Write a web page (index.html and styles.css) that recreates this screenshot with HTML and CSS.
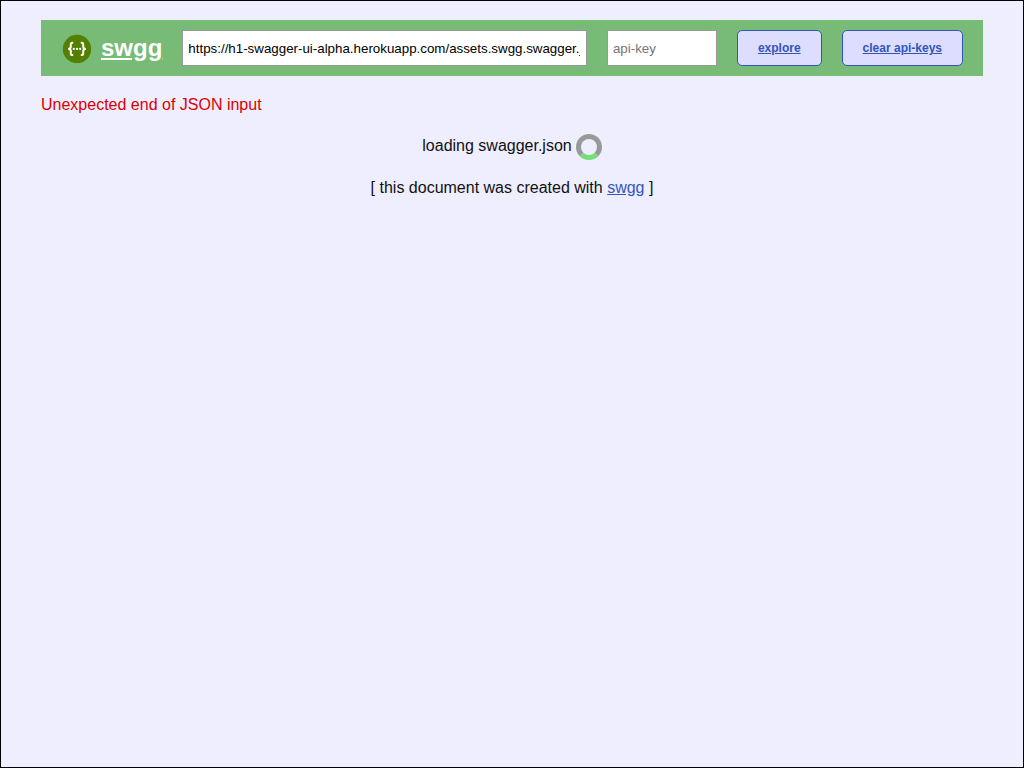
FILE: index.html
```html
<!DOCTYPE html>
<html lang="en">
<head>
<meta charset="utf-8">
<meta name="viewport" content="width=device-width, initial-scale=1">
<title>swgg</title>
<link rel="stylesheet" href="styles.css">
</head>
<body class="page">
<form class="toolbar">
  <a class="brand" href="#">
    <svg class="brand-logo" viewBox="-1 -1 31 30" aria-hidden="true">
      <circle cx="15" cy="15" r="14.2" fill="#547f00"/>
      <g fill="none" stroke="#fff" stroke-width="2">
        <path d="M11.2 8.8H10.4Q8.8 8.8 8.8 10.4V12.8Q8.8 14.9 6.2 14.9Q8.8 14.9 8.8 17V19.4Q8.8 21 10.4 21H11.2"/>
        <path d="M18.8 8.8H19.6Q21.2 8.8 21.2 10.4V12.8Q21.2 14.9 23.8 14.9Q21.2 14.9 21.2 17V19.4Q21.2 21 19.6 21H18.8"/>
      </g>
      <g fill="#fff">
        <circle cx="11.8" cy="14.9" r="1.1"/>
        <circle cx="15" cy="14.9" r="1.1"/>
        <circle cx="18.2" cy="14.9" r="1.1"/>
      </g>
    </svg>
    <span class="brand-name">swgg</span>
  </a>
  <input class="field field-url" type="text" aria-label="swagger.json url" value="https://h1-swagger-ui-alpha.herokuapp.com/assets.swgg.swagger.json">
  <input class="field field-key" type="text" aria-label="api-key" placeholder="api-key">
  <button class="button" type="button">explore</button>
  <button class="button" type="button">clear api-keys</button>
</form>
<p class="error">Unexpected end of JSON input</p>
<p class="loading">loading swagger.json <span class="spinner"></span></p>
<footer class="footer">[ this document was created with <a class="link" href="#">swgg</a> ]</footer>
</body>
</html>
```
FILE: styles.css
```css
* {
  box-sizing: border-box;
}

.page {
  min-height: 100vh;
  margin: 0;
  padding: 19px 40px;
  border: 1px solid #000;
  background: #eef;
  color: #111;
  font: 16px/18px "Liberation Sans", Arial, sans-serif;
}

.toolbar {
  display: flex;
  align-items: center;
  gap: 20px;
  padding: 10px 20px;
  background: #7b7;
}

.brand {
  display: flex;
  align-items: center;
  gap: 9px;
  color: #fff;
  font-size: 24px;
  font-weight: bold;
  line-height: 28px;
}

.brand-logo {
  width: 31px;
  height: 30px;
}

.field {
  height: 36px;
  padding: 1px 6px 1px 5px;
  border: 1px solid #999;
  background: #fff;
  color: #000;
  font-family: "Liberation Sans", Arial, sans-serif;
}

.field::placeholder {
  color: #757575;
}

.field-url {
  flex: 1;
  min-width: 0;
}

.field-key {
  width: 110px;
}

.button {
  height: 36px;
  padding: 0 20px;
  border: 1px solid #35b;
  border-radius: 5px;
  background: #ddf;
  color: #35b;
  font: bold 12px "Liberation Sans", Arial, sans-serif;
  text-decoration: underline;
  cursor: pointer;
}

.error {
  margin: 20px 0;
  color: #d00;
}

.loading {
  display: flex;
  justify-content: center;
  gap: 4px;
  margin: 0 0 19px;
  line-height: 24px;
}

.spinner {
  width: 26px;
  height: 26px;
  border: 5px solid #999;
  border-bottom-color: #7d7;
  border-radius: 50%;
}

.footer {
  text-align: center;
}

.link {
  color: #35b;
}
```
